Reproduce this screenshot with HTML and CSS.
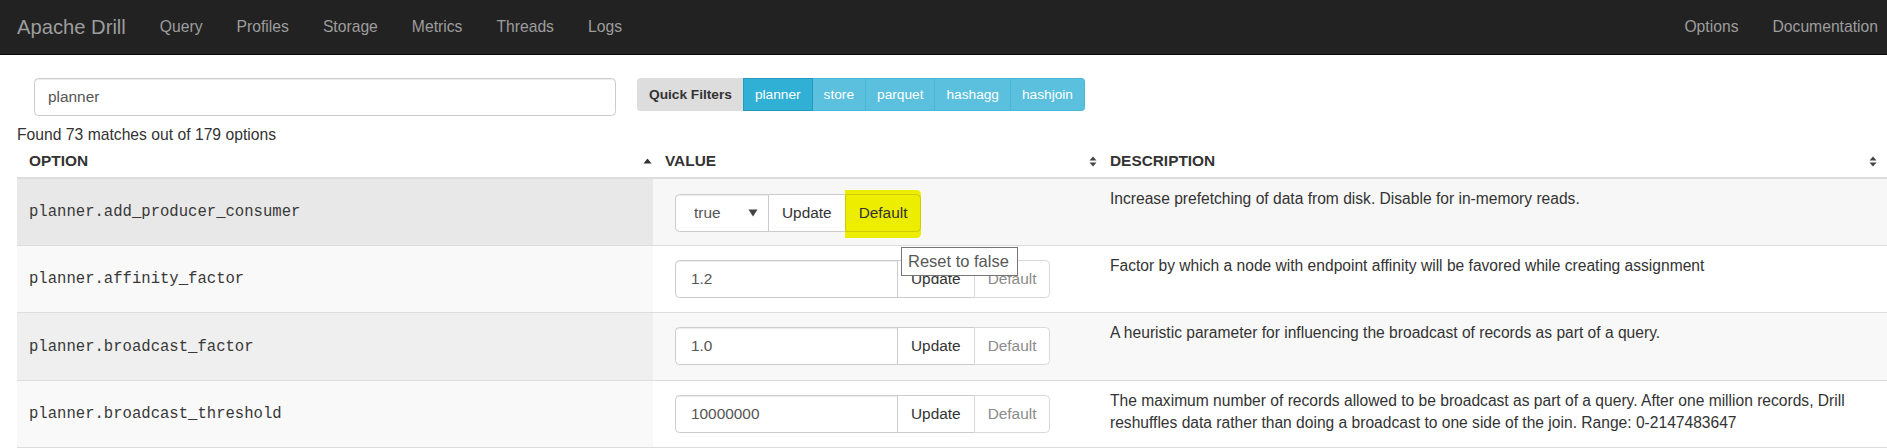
FILE: index.html
```html
<!DOCTYPE html>
<html lang="en">
<head>
<meta charset="utf-8">
<title>Apache Drill - Options</title>
<link rel="stylesheet" href="styles.css">
</head>
<body>
<nav class="navbar">
  <a class="brand" href="#">Apache Drill</a>
  <ul class="nav">
    <li><a href="#">Query</a></li>
    <li><a href="#">Profiles</a></li>
    <li><a href="#">Storage</a></li>
    <li><a href="#">Metrics</a></li>
    <li><a href="#">Threads</a></li>
    <li><a href="#">Logs</a></li>
  </ul>
  <ul class="nav nav-right">
    <li><a href="#">Options</a></li>
    <li><a href="#">Documentation</a></li>
  </ul>
</nav>

<main class="page">
  <div class="filter-bar">
    <input class="search" type="text" value="planner">
    <div class="btn-group">
      <span class="qbtn qlabel">Quick Filters</span>
      <button class="qbtn qinfo active">planner</button>
      <button class="qbtn qinfo">store</button>
      <button class="qbtn qinfo">parquet</button>
      <button class="qbtn qinfo">hashagg</button>
      <button class="qbtn qinfo">hashjoin</button>
    </div>
  </div>

  <div class="found">Found 73 matches out of 179 options</div>

  <table class="options">
    <colgroup>
      <col class="c-opt">
      <col class="c-val">
      <col class="c-desc">
    </colgroup>
    <thead>
      <tr>
        <th><div class="th-inner"><span>OPTION</span>
          <svg class="sort" width="9" height="6" viewBox="0 0 9 6"><path d="M0.5 5.5 L4.5 0.5 L8.5 5.5 Z" fill="#333"/></svg></div></th>
        <th><div class="th-inner"><span>VALUE</span>
          <svg class="sort" width="8" height="11" viewBox="0 0 8 11"><path d="M0.5 4.5 L4 0.5 L7.5 4.5 Z M0.5 6.5 L4 10.5 L7.5 6.5 Z" fill="#444"/></svg></div></th>
        <th class="th-last"><div class="th-inner"><span>DESCRIPTION</span>
          <svg class="sort" width="8" height="11" viewBox="0 0 8 11"><path d="M0.5 4.5 L4 0.5 L7.5 4.5 Z M0.5 6.5 L4 10.5 L7.5 6.5 Z" fill="#444"/></svg></div></th>
      </tr>
    </thead>
    <tbody>
      <tr class="row-hover">
        <td class="opt">planner.add_producer_consumer</td>
        <td class="val">
          <div class="input-group">
            <div class="ig-field ig-select"><span>true</span>
              <svg width="10" height="8" viewBox="0 0 10 8"><path d="M0.5 0.5 L9.5 0.5 L5 7.5 Z" fill="#444"/></svg></div>
            <button class="ig-btn">Update</button>
            <button class="ig-btn ig-last marked">Default</button>
          </div>
        </td>
        <td class="desc">Increase prefetching of data from disk. Disable for in-memory reads.</td>
      </tr>
      <tr class="row-even">
        <td class="opt">planner.affinity_factor</td>
        <td class="val">
          <div class="input-group">
            <input class="ig-field ig-input" type="text" value="1.2">
            <button class="ig-btn">Update</button>
            <button class="ig-btn ig-last" disabled>Default</button>
          </div>
        </td>
        <td class="desc">Factor by which a node with endpoint affinity will be favored while creating assignment</td>
      </tr>
      <tr class="row-odd">
        <td class="opt">planner.broadcast_factor</td>
        <td class="val">
          <div class="input-group">
            <input class="ig-field ig-input" type="text" value="1.0">
            <button class="ig-btn">Update</button>
            <button class="ig-btn ig-last" disabled>Default</button>
          </div>
        </td>
        <td class="desc">A heuristic parameter for influencing the broadcast of records as part of a query.</td>
      </tr>
      <tr class="row-even">
        <td class="opt">planner.broadcast_threshold</td>
        <td class="val">
          <div class="input-group">
            <input class="ig-field ig-input" type="text" value="10000000">
            <button class="ig-btn">Update</button>
            <button class="ig-btn ig-last" disabled>Default</button>
          </div>
        </td>
        <td class="desc">The maximum number of records allowed to be broadcast as part of a query. After one million records, Drill reshuffles data rather than doing a broadcast to one side of the join. Range: 0-2147483647</td>
      </tr>
    </tbody>
  </table>
</main>

<div class="tooltip">Reset to false</div>
</body>
</html>
```

FILE: styles.css
```css
* { box-sizing: border-box; }

html, body {
  margin: 0;
  padding: 0;
  background: #fff;
}

body {
  font-family: "Liberation Sans", Arial, sans-serif;
  font-size: 15.6px;
  line-height: 22px;
  color: #333;
  overflow: hidden;
}

/* ---------- navbar ---------- */
.navbar {
  display: flex;
  align-items: center;
  height: 55px;
  background: #222;
  border-bottom: 1px solid #080808;
}

.brand {
  padding: 0 17px 0 17px;
  font-size: 20.2px;
  line-height: 54px;
  color: #9d9d9d;
  text-decoration: none;
}

.nav {
  display: flex;
  list-style: none;
  margin: 0;
  padding: 0;
}

.nav a {
  display: block;
  padding: 0 17px;
  line-height: 54px;
  color: #9d9d9d;
  text-decoration: none;
  font-size: 15.7px;
}

.nav-right {
  margin-left: auto;
}

.nav-right li:last-child a {
  padding-right: 9px;
}

/* ---------- filter bar ---------- */
.page {
  padding-left: 17px;
}

.filter-bar {
  display: flex;
  align-items: flex-start;
  gap: 21px;
  margin-top: 23px;
  padding-left: 17px;
}

.search {
  width: 582px;
  height: 38px;
  padding: 0 13px;
  border: 1px solid #ccc;
  border-radius: 4.4px;
  font: inherit;
  font-size: 15.4px;
  color: #555;
  background: #fff;
  box-shadow: inset 0 1px 1px rgba(0, 0, 0, 0.075);
}

.btn-group {
  display: flex;
}

.qbtn {
  height: 33px;
  padding: 0 11px;
  border: 1px solid;
  font-family: inherit;
  font-size: 13.7px;
  line-height: 31px;
  margin-left: -1px;
  white-space: nowrap;
}

.qlabel {
  margin-left: 0;
  background: #dddddd;
  border-color: #dddddd;
  color: #333;
  font-weight: bold;
  border-radius: 3.3px 0 0 3.3px;
}

.qinfo {
  background: #5bc0de;
  border-color: #46b8da;
  color: #fff;
}

.qinfo.active {
  background: #31b0d5;
  border-color: #269abc;
  position: relative;
}

.qinfo:last-child {
  border-radius: 0 3.3px 3.3px 0;
}

.found {
  margin-top: 8px;
  line-height: 22px;
  font-size: 15.7px;
}

/* ---------- table ---------- */
.options {
  width: 1870px;
  table-layout: fixed;
  border-collapse: separate;
  border-spacing: 0;
}

.c-opt { width: 636px; }
.c-val { width: 445px; }
.c-desc { width: 789px; }

.options th {
  padding: 4px 1px 5px 12px;
  text-align: left;
  font-weight: bold;
  font-size: 15.4px;
  line-height: 22px;
  border-bottom: 2px solid #ddd;
}

.options th.th-last {
  padding-right: 10px;
}

.th-inner {
  display: flex;
  align-items: center;
  justify-content: space-between;
}

.sort {
  display: block;
}

.options td {
  border-bottom: 1px solid #ddd;
  height: 67px;
}

.options tbody tr:not(:first-child) td {
  height: 67.4px;
}

.opt {
  padding: 0 12px;
  vertical-align: middle;
  font-family: "Liberation Mono", "Courier New", monospace;
  font-size: 15.6px;
  color: #383838;
}

.val {
  padding: 14px 12px 0 22px;
  vertical-align: top;
}

.desc {
  padding: 9px 12px 0 12px;
  vertical-align: top;
  line-height: 22.5px;
}

.row-hover .opt { background: #e8e8e8; }
.row-hover .val, .row-hover .desc { background: #f7f7f7; }
.row-odd .opt { background: #efefef; }
.row-odd .val, .row-odd .desc { background: #f8f8f8; }
.row-even .opt { background: #f9f9f9; }
.row-even .val, .row-even .desc { background: #fff; }

.row-hover .val { padding-top: 15px; }

/* ---------- input group ---------- */
.input-group {
  display: flex;
  height: 38px;
}

.ig-field {
  height: 38px;
  border: 1px solid #ccc;
  border-radius: 4.4px 0 0 4.4px;
  background: #fff;
  color: #555;
  font-family: inherit;
  font-size: 15.4px;
  box-shadow: inset 0 1px 1px rgba(0, 0, 0, 0.075);
}

.ig-input {
  width: 223px;
  padding: 0 15px;
}

.ig-select {
  width: 94px;
  display: flex;
  align-items: center;
  justify-content: space-between;
  padding: 0 10px 0 18px;
}

.ig-btn {
  height: 38px;
  margin-left: -1px;
  padding: 0 13px;
  border: 1px solid #ccc;
  background: #fff;
  color: #333;
  font-family: inherit;
  font-size: 15.4px;
  white-space: nowrap;
}

.ig-last {
  border-radius: 0 4.4px 4.4px 0;
}

.ig-btn:disabled {
  color: #8c8c8c;
  border-color: #d9d9d9;
}

.ig-btn.marked {
  background: #eded00;
  border-color: #cccc00;
  color: #333;
  box-shadow: 0 -4px 0 #eded00, 0 6px 0 #eded00;
}

/* ---------- tooltip ---------- */
.tooltip {
  position: absolute;
  left: 901px;
  top: 247px;
  width: 117px;
  height: 29px;
  padding: 0 6px;
  border: 1px solid #767676;
  background: #fff;
  color: #575757;
  font-size: 16.5px;
  line-height: 27px;
  white-space: nowrap;
}
```
